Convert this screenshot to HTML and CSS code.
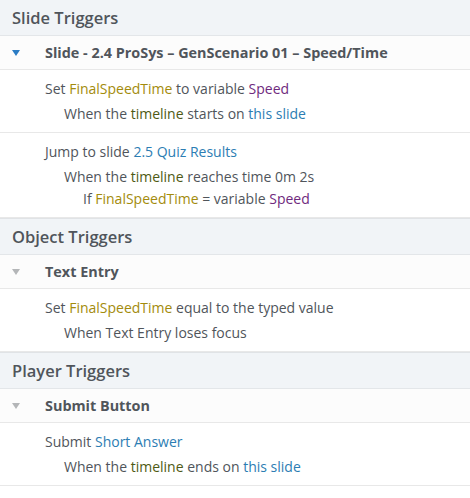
FILE: index.html
```html
<!DOCTYPE html>
<html>
<head>
<meta charset="utf-8">
<link rel="stylesheet" href="styles.css">
</head>
<body>
<div class="panel">
  <div class="section first">
    <div class="section-title">Slide Triggers</div>
    <div class="group">
      <div class="group-head"><span class="caret active"></span><span class="group-name">Slide - 2.4 ProSys – GenScenario 01 – Speed/Time</span></div>
      <div class="trigger">
        <div class="action">Set <span class="var">FinalSpeedTime</span> to variable <span class="val">Speed</span></div>
        <div class="cond">When the <span class="kw">timeline</span> starts on <span class="link">this slide</span></div>
      </div>
      <div class="trigger">
        <div class="action">Jump to slide <span class="link">2.5 Quiz Results</span></div>
        <div class="cond">When the <span class="kw">timeline</span> reaches time 0m 2s</div>
        <div class="cond sub">If <span class="var">FinalSpeedTime</span> = variable <span class="val">Speed</span></div>
      </div>
    </div>
  </div>
  <div class="section">
    <div class="section-title">Object Triggers</div>
    <div class="group">
      <div class="group-head"><span class="caret"></span><span class="group-name">Text Entry</span></div>
      <div class="trigger">
        <div class="action">Set <span class="var">FinalSpeedTime</span> equal to the typed value</div>
        <div class="cond">When Text Entry loses focus</div>
      </div>
    </div>
  </div>
  <div class="section">
    <div class="section-title">Player Triggers</div>
    <div class="group">
      <div class="group-head"><span class="caret"></span><span class="group-name">Submit Button</span></div>
      <div class="trigger">
        <div class="action">Submit <span class="link">Short Answer</span></div>
        <div class="cond">When the <span class="kw">timeline</span> ends on <span class="link">this slide</span></div>
      </div>
    </div>
  </div>
</div>
</body>
</html>
```
FILE: styles.css
```css
html, body {
  margin: 0;
  padding: 0;
  background: #ffffff;
}
body {
  font-family: "Open Sans", "Noto Sans", sans-serif;
  color: #50555b;
}
.panel {
  width: 470px;
}
.section {
  border-top: 1px solid #e0e3e6;
}
.section.first {
  border-top: none;
}
.section-title {
  height: 35px;
  line-height: 35px;
  padding-left: 12px;
  background: #f1f4f7;
  border-bottom: 1px solid #e3e6e9;
  font-size: 16.5px;
  font-weight: 600;
  color: #50555b;
}
.group-head {
  display: flex;
  align-items: center;
  height: 33px;
  background: #fcfcfc;
  border-bottom: 1px solid #e8e8e8;
}
.caret {
  width: 0;
  height: 0;
  margin-left: 12px;
  margin-right: 25px;
  border-left: 4.5px solid transparent;
  border-right: 4.5px solid transparent;
  border-top: 6px solid #b4b6b8;
}
.caret.active {
  border-top-color: #2b7cc4;
}
.group-name {
  font-size: 14.4px;
  font-weight: 700;
  color: #50555b;
}
.trigger {
  padding: 8px 0 7px 45px;
  border-bottom: 1px solid #e8e8e8;
  font-size: 14px;
}
.action {
  height: 22px;
  line-height: 22px;
  margin-bottom: 3px;
}
.cond {
  height: 22px;
  line-height: 22px;
  padding-left: 19px;
}
.cond.sub {
  padding-left: 38px;
}
.var {
  color: #a38b0c;
}
.val {
  color: #6f2a7e;
}
.link {
  color: #2c7db3;
}
.kw {
  color: #4f5a14;
}
```
